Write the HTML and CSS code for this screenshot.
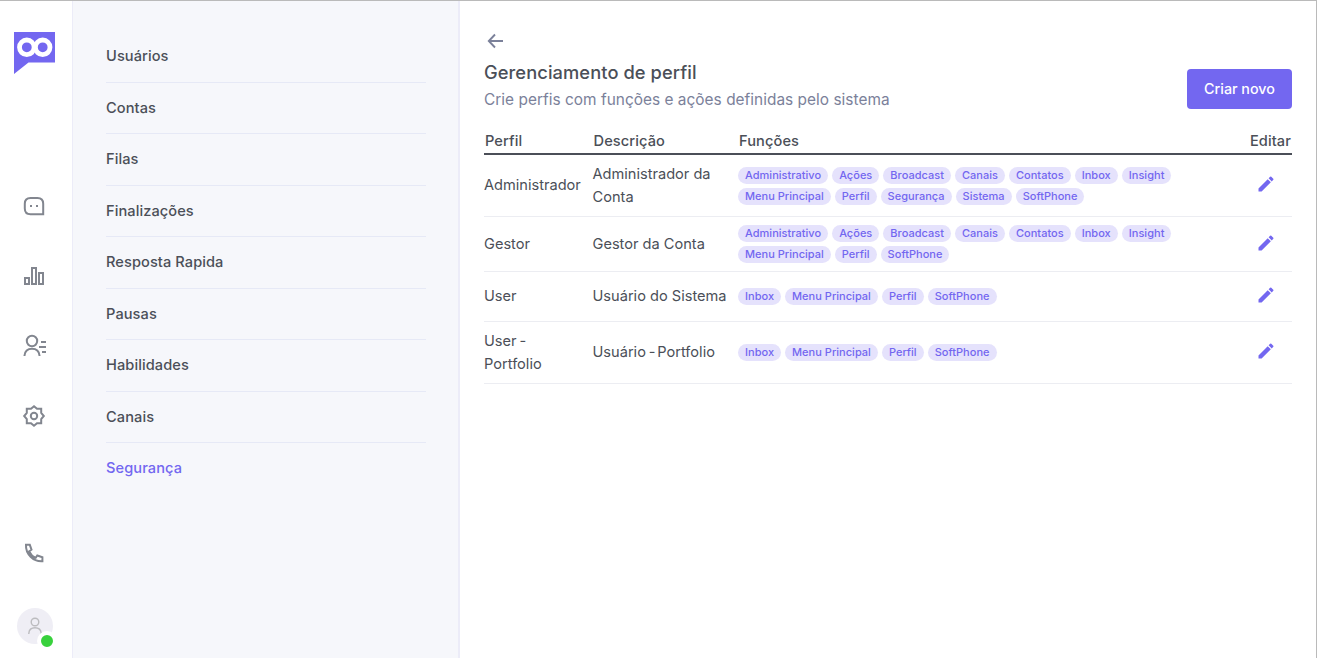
FILE: index.html
```html
<!DOCTYPE html>
<html lang="pt-BR">
<head>
  <meta charset="UTF-8" />
  <meta name="viewport" content="width=device-width, initial-scale=1.0" />
  <title>Gerenciamento de perfil</title>
  <link rel="stylesheet" href="styles.css">
</head>
<body>
  <div class="app">
    <!-- Icon bar -->
    <aside class="sidebar">
      <svg class="logo" width="41" height="42" viewBox="0 0 41 42">
        <path d="M0 0H41V30.5H14.5L0 42Z" fill="#7367f0" />
        <circle cx="12.8" cy="15.3" r="7.3" fill="none" stroke="#fff" stroke-width="4.8" />
        <circle cx="28.7" cy="15.3" r="7.3" fill="none" stroke="#fff" stroke-width="4.8" />
      </svg>
      <nav class="side-nav">
        <svg class="side-icon" width="24" height="24" viewBox="0 0 24 24">
          <path d="M8.5 4H15.5Q21.2 4 21.2 9.7V20.2H8.5Q2.8 20.2 2.8 14.5V9.7Q2.8 4 8.5 4Z" />
          <path d="M8 12H10M14 12H16" />
        </svg>
        <svg class="side-icon" width="24" height="24" viewBox="0 0 24 24">
          <path d="M3 14H7V20H3ZM10 4H14V20H10ZM17 9H21V20H17Z" />
        </svg>
        <svg class="side-icon" width="24" height="24" viewBox="0 0 24 24">
          <circle cx="10" cy="7" r="5.2" />
          <path d="M2.5 22V21.5Q3.2 14.7 10 14.7Q16.8 14.7 17.5 21.5V22M19 8H24M17 13H24M20 18H24" />
        </svg>
        <svg class="side-icon" width="24" height="24" viewBox="0 0 24 24">
          <path d="M12 2.2L15 4.8H19.2V9L21.8 12L19.2 15V19.2H15L12 21.8L9 19.2H4.8V15L2.2 12L4.8 9V4.8H9Z" />
          <circle cx="12" cy="12" r="3.2" />
        </svg>
      </nav>
      <svg class="side-icon phone" width="24" height="24" viewBox="0 0 24 24">
        <path d="M4 3.8H7.8L9.5 8.7L7.2 10.3Q9.2 14.8 13.7 16.8L15.3 14.5L20.4 16.2V20.2Q13.5 20.6 8.6 15.7Q3.6 10.7 4 3.8Z" />
      </svg>
      <div class="avatar">
        <svg width="18" height="18" viewBox="0 0 18 18">
          <circle cx="9" cy="5" r="3.8" />
          <path d="M2.8 17V16.5Q3.2 10.8 9 10.8Q14.8 10.8 15.2 16.5V17" />
        </svg>
        <span class="status"></span>
      </div>
    </aside>

    <!-- Settings menu -->
    <ul class="menu">
      <li>Usuários</li>
      <li>Contas</li>
      <li>Filas</li>
      <li>Finalizações</li>
      <li>Resposta Rapida</li>
      <li>Pausas</li>
      <li>Habilidades</li>
      <li>Canais</li>
      <li class="active">Segurança</li>
    </ul>

    <main class="content">
      <svg class="back" width="24" height="24" viewBox="0 0 24 24">
        <path d="M19 12H5M11 5.5L4.8 12L11 18.5" />
      </svg>
      <div class="page-header">
        <div>
          <h1>Gerenciamento de perfil</h1>
          <p>Crie perfis com funções e ações definidas pelo sistema</p>
        </div>
        <button class="create-btn">Criar novo</button>
      </div>

      <table class="profiles">
        <colgroup>
          <col class="col-profile"><col class="col-desc"><col><col class="col-edit">
        </colgroup>
        <thead>
          <tr><th>Perfil</th><th>Descrição</th><th>Funções</th><th class="edit">Editar</th></tr>
        </thead>
        <tbody>
          <tr class="row-lg">
            <td>Administrador</td>
            <td>Administrador da Conta</td>
            <td><div class="tags"><span>Administrativo</span><span>Ações</span><span>Broadcast</span><span>Canais</span><span>Contatos</span><span>Inbox</span><span>Insight</span><span>Menu Principal</span><span>Perfil</span><span>Segurança</span><span>Sistema</span><span>SoftPhone</span></div></td>
            <td class="edit"><svg class="pencil" width="20" height="20" viewBox="0 0 24 24"><path d="M3 17.25V21h3.75L17.81 9.94l-3.75-3.75L3 17.25zM20.71 7.04a1 1 0 0 0 0-1.41l-2.34-2.34a1 1 0 0 0-1.41 0l-1.83 1.83 3.75 3.75 1.83-1.83z" /></svg></td>
          </tr>
          <tr class="row-md">
            <td>Gestor</td>
            <td>Gestor da Conta</td>
            <td><div class="tags"><span>Administrativo</span><span>Ações</span><span>Broadcast</span><span>Canais</span><span>Contatos</span><span>Inbox</span><span>Insight</span><span>Menu Principal</span><span>Perfil</span><span>SoftPhone</span></div></td>
            <td class="edit"><svg class="pencil" width="20" height="20" viewBox="0 0 24 24"><path d="M3 17.25V21h3.75L17.81 9.94l-3.75-3.75L3 17.25zM20.71 7.04a1 1 0 0 0 0-1.41l-2.34-2.34a1 1 0 0 0-1.41 0l-1.83 1.83 3.75 3.75 1.83-1.83z" /></svg></td>
          </tr>
          <tr class="row-sm">
            <td>User</td>
            <td>Usuário do Sistema</td>
            <td><div class="tags"><span>Inbox</span><span>Menu Principal</span><span>Perfil</span><span>SoftPhone</span></div></td>
            <td class="edit"><svg class="pencil" width="20" height="20" viewBox="0 0 24 24"><path d="M3 17.25V21h3.75L17.81 9.94l-3.75-3.75L3 17.25zM20.71 7.04a1 1 0 0 0 0-1.41l-2.34-2.34a1 1 0 0 0-1.41 0l-1.83 1.83 3.75 3.75 1.83-1.83z" /></svg></td>
          </tr>
          <tr class="row-lg">
            <td>User<span class="dash"> -</span> Portfolio</td>
            <td>Usuário<span class="dash"> - </span>Portfolio</td>
            <td><div class="tags"><span>Inbox</span><span>Menu Principal</span><span>Perfil</span><span>SoftPhone</span></div></td>
            <td class="edit"><svg class="pencil" width="20" height="20" viewBox="0 0 24 24"><path d="M3 17.25V21h3.75L17.81 9.94l-3.75-3.75L3 17.25zM20.71 7.04a1 1 0 0 0 0-1.41l-2.34-2.34a1 1 0 0 0-1.41 0l-1.83 1.83 3.75 3.75 1.83-1.83z" /></svg></td>
          </tr>
        </tbody>
      </table>
    </main>
  </div>
</body>
</html>
```
FILE: styles.css
```css
* { margin: 0; padding: 0; box-sizing: border-box; }
body {
  font-family: Inter, "Liberation Sans", sans-serif;
  font-size: 14.6px;
  line-height: 22.5px;
  color: #4b4f58;
  background: #fff;
}
.app {
  display: flex;
  width: 1317px;
  height: 658px;
  border-top: 1px solid #bababa;
  border-right: 1px solid #bababa;
  overflow: hidden;
}

/* Icon bar */
.sidebar {
  width: 72px;
  flex: none;
  display: flex;
  flex-direction: column;
  padding: 31px 0 14px 14px;
}
.logo { display: block; }
.side-nav {
  display: flex;
  flex-direction: column;
  gap: 46px;
  margin: 120px 0 0 8px;
}
.side-icon {
  display: block;
  fill: none;
  stroke: #82868f;
  stroke-width: 2;
  overflow: visible;
}
.phone { margin: 113px 0 0 8px; }
.avatar {
  position: relative;
  display: flex;
  align-items: center;
  justify-content: center;
  width: 36px;
  height: 36px;
  margin: auto 0 0 3px;
  border-radius: 50%;
  background: #efeef5;
}
.avatar svg {
  fill: none;
  stroke: #bcbcbf;
  stroke-width: 1.4;
}
.status {
  position: absolute;
  right: -4px;
  bottom: -7px;
  width: 20px;
  height: 20px;
  border: 4px solid #fff;
  border-radius: 50%;
  background: #38d13c;
}

/* Settings menu */
.menu {
  width: 388px;
  flex: none;
  padding: 30px 32px 0 33px;
  list-style: none;
  background: #f6f7fb;
  border-left: 1px solid #ececf8;
  border-right: 2px solid #ececf8;
}
.menu li {
  padding: 14px 0;
  border-bottom: 1px solid #e6e9f6;
  font-weight: 550;
  letter-spacing: 0.08px;
}
.menu li:last-child { border-bottom: none; }
.menu .active { color: #7367f0; }

/* Content */
.content {
  flex: 1;
  padding: 28px 24px 0;
}
.back {
  display: block;
  fill: none;
  stroke: #7b819a;
  stroke-width: 1.9;
}
.page-header {
  display: flex;
  justify-content: space-between;
  height: 74px;
}
h1 {
  margin-top: 7px;
  font-size: 18.3px;
  font-weight: 550;
  line-height: 24px;
  letter-spacing: 0.08px;
}
.page-header p {
  margin-top: 4px;
  font-size: 15.4px;
  line-height: 24px;
  letter-spacing: 0.03px;
  color: #7b819a;
}
.create-btn {
  width: 105px;
  height: 40px;
  margin-top: 16px;
  padding-bottom: 2px;
  border: none;
  border-radius: 4px;
  background: #7367f0;
  color: #fff;
  font: 500 14.3px Inter, "Liberation Sans", sans-serif;
}

/* Profiles table */
.profiles {
  width: 808px;
  table-layout: fixed;
  border-collapse: separate;
  border-spacing: 0;
}
.col-profile { width: 108.5px; }
.col-desc { width: 145.5px; }
.col-edit { width: 54px; }
.profiles th {
  height: 28px;
  padding: 3px 1px 0;
  border-bottom: 2px solid #4b4f58;
  font-weight: 550;
  letter-spacing: 0.1px;
  text-align: left;
}
.profiles td {
  padding-right: 8px;
  border-bottom: 1px solid #ecedf2;
  vertical-align: middle;
}
.row-lg { height: 62px; }
.row-md { height: 55px; }
.row-sm { height: 50px; }
.profiles .edit { text-align: right; }
.pencil {
  display: block;
  margin: 0 8.5px 3px auto;
  fill: #7367f0;
}
.dash { letter-spacing: -1.2px; }
.tags {
  display: flex;
  flex-wrap: wrap;
  gap: 4px;
  width: 435px;
}
.tags span {
  height: 17px;
  padding: 0 7px;
  border-radius: 9px;
  background: #e5e2fc;
  color: #7367f0;
  font-size: 11px;
  font-weight: 450;
  line-height: 17px;
  letter-spacing: 0.02px;
}
```
